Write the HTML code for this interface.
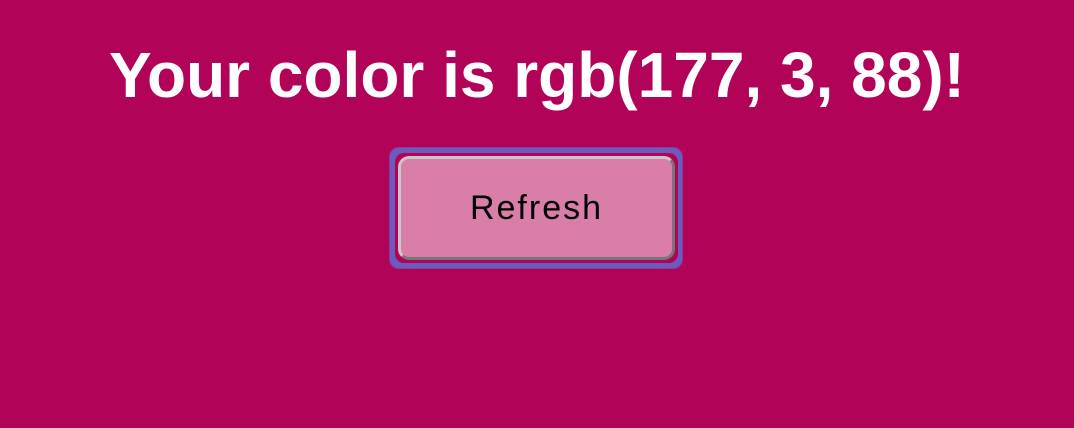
<!DOCTYPE html>
<html><head><style>
html,body{margin:0;padding:0;width:1074px;height:428px;background:#b10358;overflow:hidden}
h1{position:absolute;left:0;top:43px;width:1074px;margin:0;text-align:center;font:bold 64px/64px "Liberation Sans",Arial,sans-serif;color:#fff}
.ring{position:absolute;left:390px;top:148px;width:292px;height:120px;box-sizing:border-box;border-radius:9px;background:#6a5cbf;box-shadow:0 0 0 1px #8a3a9a}
.btn{position:absolute;left:398px;top:156px;width:277px;height:104px;box-sizing:border-box;border:3px solid;border-color:#c8c8c8 #777 #777 #c8c8c8;border-radius:11px;background:#d97ea9;font:34px "Liberation Sans",Arial,sans-serif;letter-spacing:2px;color:#000;text-align:center;line-height:98px}
.inner{position:absolute;left:395px;top:153px;width:283px;height:110px;background:#b10358;border-radius:9px}
</style></head><body>
<h1>Your color is rgb(177, 3, 88)!</h1>
<div class="ring"></div>
<div class="inner"></div>
<div class="btn">Refresh</div>
</body></html>
